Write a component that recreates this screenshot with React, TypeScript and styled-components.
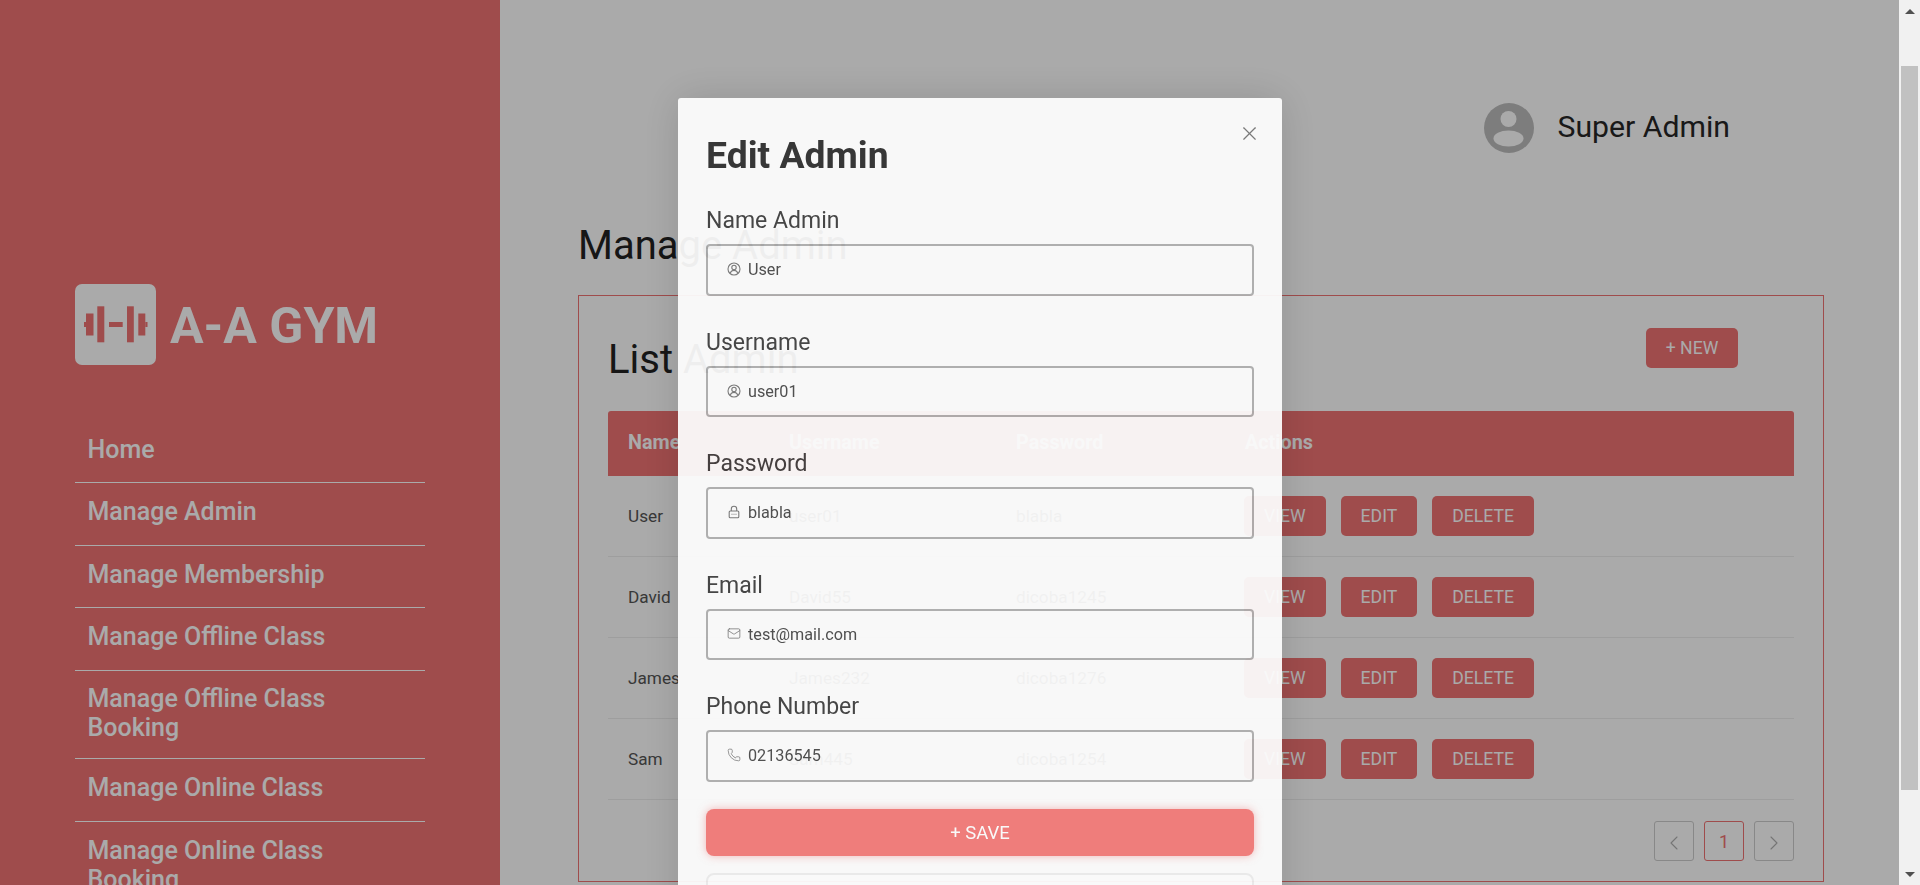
import React from "react";
import styled, { createGlobalStyle } from "styled-components";
import { Mail, Phone, X, ChevronLeft, ChevronRight } from "lucide-react";

const primary = "#ef7272";

const Global = createGlobalStyle`
  html, body { margin: 0; padding: 0; height: 885px; overflow: hidden; background: #fff; }
  * { box-sizing: border-box; }
  body { font-family: Roboto, "Liberation Sans", sans-serif; color: #1f1f1f; }
`;

const Viewport = styled.div`
  display: flex;
  width: 1920px;
  height: 885px;
  overflow: hidden;
`;
const PageArea = styled.div`
  position: relative;
  display: flex;
  width: 1899px;
  height: 885px;
  overflow: hidden;
`;
const Sidebar = styled.aside`
  flex: 0 0 500px;
  background: ${primary};
  padding: 284px 75px 0;
  color: #fff;
`;
const Brand = styled.div`
  display: flex;
  align-items: center;
  gap: 14px;
  margin-bottom: 56px;
`;
const LogoBox = styled.div`
  width: 81px;
  height: 81px;
  border-radius: 7px;
  background: #fff;
  display: flex;
`;
const BrandName = styled.div`
  font-size: 50px;
  font-weight: 700;
  line-height: 1;
  margin-top: 3px;
`;
const Nav = styled.nav`
  width: 350px;
  display: flex;
  flex-direction: column;
`;
const NavItem = styled.a<{ $double?: boolean }>`
  display: block;
  padding: 13.8px 13px ${(p) => (p.$double ? "16px" : "18.6px")} 12.5px;
  font-size: 25px;
  font-weight: 500;
  line-height: 29px;
  color: #fff;
  border-bottom: 1px solid #fff;
`;
const Main = styled.main`
  flex: 1;
  padding: 103px 75px 0 78px;
  background: #fff;
`;
const UserBar = styled.div`
  display: flex;
  justify-content: flex-end;
  align-items: center;
  gap: 24px;
  padding-right: 94px;
  margin-bottom: 69px;
`;
const UserName = styled.div`
  font-size: 30.2px;
  font-weight: 400;
  margin-top: -3px;
  color: #262626;
`;
const PageTitle = styled.h1`
  margin: 0 0 26px;
  font-size: 40px;
  line-height: 47px;
  font-weight: 400;
  color: #222;
`;
const Card = styled.section`
  border: 1px solid ${primary};
  padding: 32px 29px 20px;
`;
const CardHead = styled.div`
  display: flex;
  justify-content: space-between;
  align-items: flex-start;
  height: 83px;
  padding-right: 56px;
`;
const CardTitle = styled.h2`
  margin: 8px 0 0;
  font-size: 40px;
  line-height: 47px;
  font-weight: 400;
  color: #222;
`;
const RedButton = styled.button`
  height: 40px;
  padding: 0 20px;
  border: 0;
  border-radius: 5px;
  background: ${primary};
  color: #fff;
  font: 400 17.6px Roboto, sans-serif;
`;
const NewButton = styled(RedButton)`
  width: 92px;
  padding: 0;
`;
const Row = styled.div`
  display: grid;
  grid-template-columns: 161px 227px 229px 1fr;
  align-items: center;
`;
const HeadRow = styled(Row)`
  height: 65px;
  background: ${primary};
  border-radius: 3px 3px 0 0;
  color: #fff;
  font-size: 19.8px;
  font-weight: 700;
  padding-bottom: 3px;
`;
const BodyRow = styled(Row)`
  height: 81px;
  border-bottom: 1px solid #eee;
  font-size: 17.2px;
  color: #555;
`;
const Cell = styled.div`
  padding-left: 20px;
  margin-top: -1px;
`;
const HeadCell = styled.div`
  padding-left: 20px;
`;
const Actions = styled.div`
  display: flex;
  gap: 15px;
  padding-left: 19px;
`;
const Pager = styled.div`
  display: flex;
  justify-content: flex-end;
  gap: 10px;
  margin-top: 21px;
`;
const PageButton = styled.div<{ $active?: boolean }>`
  width: 40px;
  height: 40px;
  display: flex;
  align-items: center;
  justify-content: center;
  border: 1px solid ${(p) => (p.$active ? primary : "#ccc")};
  border-radius: 3px;
  color: ${(p) => (p.$active ? primary : "#b0b0b0")};
  font-size: 18px;
  svg { margin-top: 3px; }
`;
const Overlay = styled.div`
  position: absolute;
  inset: 0;
  background: rgba(0, 0, 0, 0.335);
`;
const Modal = styled.div`
  position: absolute;
  left: 678px;
  top: 98px;
  width: 604px;
  padding: 35px 28px 40px;
  background: #fefefe;
  border-radius: 3px;
  opacity: 0.935;
  box-shadow: 0 0 40px rgba(0, 0, 0, 0.14);
  filter: blur(0.5px);
  color: #333;
`;
const CloseButton = styled.div`
  position: absolute;
  top: 24px;
  right: 21px;
  color: #777;
  display: flex;
`;
const ModalTitle = styled.h2`
  margin: 0 0 30px;
  font-size: 37.3px;
  line-height: 44px;
  font-weight: 700;
  color: #2f2f2f;
`;
const Fields = styled.div`
  display: flex;
  flex-direction: column;
  gap: 33px;
`;
const Field = styled.div`
  display: flex;
  flex-direction: column;
  gap: 9px;
`;
const Label = styled.label`
  font-size: 23px;
  line-height: 28px;
  color: #3f3f3f;
`;
const InputBox = styled.div`
  height: 51.5px;
  display: flex;
  align-items: center;
  gap: 7px;
  padding: 0 19px;
  border: 2px solid #b0b0b0;
  border-radius: 4px;
  font-size: 16.2px;
  color: #4a4a4a;
`;
const IconSlot = styled.span`
  width: 14px;
  height: 14px;
  display: flex;
  align-items: center;
  justify-content: center;
  color: #777;
  margin-top: -1px;
`;
const SaveButton = styled.button`
  width: 100%;
  height: 47px;
  margin-top: 27.5px;
  border: 0;
  border-radius: 8px;
  background: #f47a78;
  color: #fff;
  font: 400 18.5px Roboto, sans-serif;
  box-shadow: 0 0 8px rgba(239, 114, 114, 0.5);
`;
const CancelButton = styled.button`
  width: 100%;
  height: 47px;
  margin-top: 17px;
  border: 2px solid #eee;
  border-radius: 8px;
  background: #fff;
`;
const ScrollTrack = styled.div`
  position: relative;
  flex: 0 0 21px;
  height: 885px;
  background: #f1f1f1;
`;
const ScrollArrow = styled.div<{ $down?: boolean }>`
  position: absolute;
  left: 6px;
  ${(p) => (p.$down ? "bottom: 8px;" : "top: 9px;")}
  width: 0;
  height: 0;
  border-left: 5px solid transparent;
  border-right: 5px solid transparent;
  ${(p) => (p.$down ? "border-top: 5px solid #505050;" : "border-bottom: 5px solid #505050;")}
`;
const ScrollThumb = styled.div`
  position: absolute;
  left: 2px;
  top: 66px;
  width: 17px;
  height: 724px;
  background: #c1c1c1;
`;

const Logo = () => (
  <svg width="81" height="81" viewBox="0 0 81 81" fill={primary}>
    <rect x="9" y="38" width="2.5" height="5" />
    <rect x="11" y="29.5" width="7.5" height="22" />
    <rect x="22.3" y="22.3" width="7" height="36" />
    <rect x="34" y="38" width="13.7" height="5" />
    <rect x="52" y="22.3" width="6.8" height="36" />
    <rect x="63.3" y="29.5" width="7" height="22" />
    <rect x="70.3" y="38" width="2.2" height="5" />
  </svg>
);
const Avatar = () => (
  <svg width="50" height="50" viewBox="0 0 50 50">
    <circle cx="25" cy="25" r="25" fill="#bcbcbc" />
    <circle cx="24.5" cy="16" r="8" fill="#fff" />
    <ellipse cx="24.5" cy="35.5" rx="15" ry="8" fill="#fff" />
  </svg>
);
const UserIcon = () => (
  <svg width="14" height="14" viewBox="0 0 14 14" fill="none" stroke="currentColor" strokeWidth="1.1">
    <circle cx="7" cy="7" r="6" />
    <circle cx="7" cy="5.5" r="2.2" />
    <path d="M3.2 11c.8-1.8 2.2-2.6 3.8-2.6s3 .8 3.8 2.6" />
  </svg>
);
const LockIcon = () => (
  <svg width="14" height="14" viewBox="0 0 14 14" fill="none" stroke="currentColor" strokeWidth="1.1">
    <rect x="2.2" y="6" width="9.6" height="6.8" rx="1" />
    <path d="M4.3 6V4a2.7 2.7 0 0 1 5.4 0v2" />
    <path d="M4.5 9.2h5" strokeDasharray="1 1" />
  </svg>
);

const navItems: [string, boolean][] = [
  ["Home", false],
  ["Manage Admin", false],
  ["Manage Membership", false],
  ["Manage Offline Class", false],
  ["Manage Offline Class Booking", true],
  ["Manage Online Class", false],
  ["Manage Online Class Booking", true],
];
const admins = [
  ["User", "user01", "blabla"],
  ["David", "David55", "dicoba1245"],
  ["James", "James232", "dicoba1276"],
  ["Sam", "Sam445", "dicoba1254"],
];
const fields: [string, string, React.ReactNode][] = [
  ["Name Admin", "User", <UserIcon />],
  ["Username", "user01", <UserIcon />],
  ["Password", "blabla", <LockIcon />],
  ["Email", "test@mail.com", <Mail size={15} strokeWidth={1.4} />],
  ["Phone Number", "02136545", <Phone size={14} strokeWidth={1.3} />],
];

export default function App() {
  return (
    <>
      <Global />
      <Viewport>
        <PageArea>
          <Sidebar>
            <Brand>
              <LogoBox><Logo /></LogoBox>
              <BrandName>A-A GYM</BrandName>
            </Brand>
            <Nav>
              {navItems.map(([n, d]) => <NavItem key={n} $double={d}>{n}</NavItem>)}
            </Nav>
          </Sidebar>
          <Main>
            <UserBar>
              <Avatar />
              <UserName>Super Admin</UserName>
            </UserBar>
            <PageTitle>Manage Admin</PageTitle>
            <Card>
              <CardHead>
                <CardTitle>List Admin</CardTitle>
                <NewButton>+ NEW</NewButton>
              </CardHead>
              <HeadRow>
                <HeadCell>Name</HeadCell>
                <HeadCell>Username</HeadCell>
                <HeadCell>Password</HeadCell>
                <HeadCell>Actions</HeadCell>
              </HeadRow>
              {admins.map((a) => (
                <BodyRow key={a[0]}>
                  <Cell>{a[0]}</Cell>
                  <Cell>{a[1]}</Cell>
                  <Cell>{a[2]}</Cell>
                  <Actions>
                    <RedButton>VIEW</RedButton>
                    <RedButton>EDIT</RedButton>
                    <RedButton>DELETE</RedButton>
                  </Actions>
                </BodyRow>
              ))}
              <Pager>
                <PageButton><ChevronLeft size={24} strokeWidth={1.1} /></PageButton>
                <PageButton $active>1</PageButton>
                <PageButton><ChevronRight size={24} strokeWidth={1.1} /></PageButton>
              </Pager>
            </Card>
          </Main>
          <Overlay />
          <Modal>
            <CloseButton><X size={23} strokeWidth={1.2} /></CloseButton>
            <ModalTitle>Edit Admin</ModalTitle>
            <Fields>
              {fields.map(([label, value, icon]) => (
                <Field key={label}>
                  <Label>{label}</Label>
                  <InputBox>
                    <IconSlot>{icon}</IconSlot>
                    {value}
                  </InputBox>
                </Field>
              ))}
            </Fields>
            <SaveButton>+ SAVE</SaveButton>
            <CancelButton />
          </Modal>
        </PageArea>
        <ScrollTrack>
          <ScrollArrow />
          <ScrollThumb />
          <ScrollArrow $down />
        </ScrollTrack>
      </Viewport>
    </>
  );
}
